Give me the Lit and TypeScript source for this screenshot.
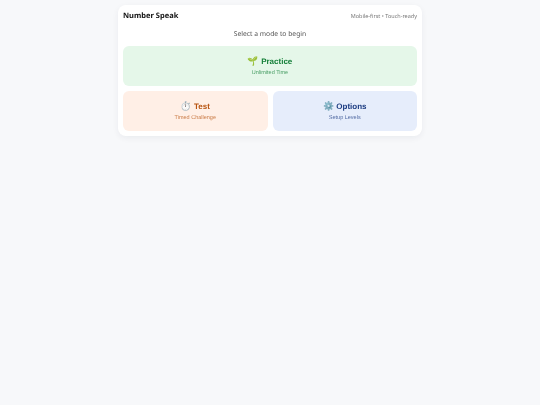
import { LitElement, html, css } from "lit";
import { customElement } from "lit/decorators.js";

@customElement("app-root")
export class AppRoot extends LitElement {
  static styles = css`
    :host {
      display: block;
      min-height: 405px;
      background: #f7f8fa;
      font-family: "Noto Sans", sans-serif;
      padding-top: 5px;
      box-sizing: border-box;
      text-rendering: geometricPrecision;
    }
    .card {
      width: 304px;
      box-sizing: border-box;
      margin: 0 auto;
      background: #fff;
      border-radius: 8px;
      box-shadow: 0 2px 6px rgba(20, 30, 60, 0.06);
      padding: 5px;
      filter: blur(0.35px);
    }
    .head {
      display: flex;
      justify-content: space-between;
      align-items: center;
      height: 12px;
    }
    .title { font-size: 7.5px; font-weight: 700; color: #111; }
    .note { font-size: 5.5px; color: #777; }
    .prompt {
      text-align: center;
      font-size: 6.75px;
      color: #555;
      margin-top: 4px;
      height: 16px;
      line-height: 16px;
      margin-bottom: 4px;
    }
    .grid {
      display: grid;
      grid-template-columns: 1fr 1fr;
      gap: 5px;
    }
    .btn {
      height: 40px;
      border-radius: 6px;
      display: flex;
      flex-direction: column;
      align-items: center;
      justify-content: center;
      font-family: "Liberation Sans", Arial, sans-serif;
    }
    .wide { grid-column: 1 / 3; }
    .name { font-size: 8px; font-weight: 700; line-height: 12px; }
    .emoji { font-size: 9px; }
    .sub { font-size: 5.5px; line-height: 8px; margin-top: 1.5px; opacity: 0.75; }
    .green { background: #e5f7e9; color: #16803a; }
    .orange { background: #ffefe6; color: #b85410; }
    .blue { background: #e6edfb; color: #1a3a80; }
  `;

  render() {
    return html`
      <div class="card">
        <div class="head">
          <span class="title">Number Speak</span>
          <span class="note">Mobile-first • Touch-ready</span>
        </div>
        <div class="prompt">Select a mode to begin</div>
        <div class="grid">
          <div class="btn wide green">
            <div class="name"><span class="emoji">🌱</span> Practice</div>
            <div class="sub">Unlimited Time</div>
          </div>
          <div class="btn orange">
            <div class="name"><span class="emoji">⏱️</span> Test</div>
            <div class="sub">Timed Challenge</div>
          </div>
          <div class="btn blue">
            <div class="name"><span class="emoji">⚙️</span> Options</div>
            <div class="sub">Setup Levels</div>
          </div>
        </div>
      </div>
    `;
  }
}
